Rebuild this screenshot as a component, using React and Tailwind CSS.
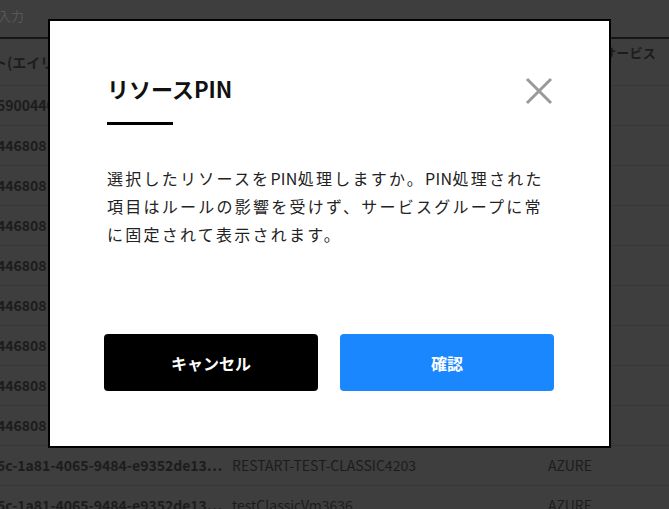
const rows = [
  { id: "5900446…", name: "", cloud: "" },
  { id: "446808", name: "", cloud: "" },
  { id: "446808", name: "", cloud: "" },
  { id: "446808", name: "", cloud: "" },
  { id: "446808", name: "", cloud: "" },
  { id: "446808", name: "", cloud: "" },
  { id: "446808", name: "", cloud: "" },
  { id: "446808", name: "", cloud: "" },
  { id: "446808", name: "", cloud: "" },
  { id: "5c-1a81-4065-9484-e9352de13…", name: "RESTART-TEST-CLASSIC4203", cloud: "AZURE" },
  { id: "5c-1a81-4065-9484-e9352de13…", name: "testClassicVm3636", cloud: "AZURE" },
];

function CloseIcon() {
  return (
    <svg width="28" height="28" viewBox="0 0 28 28" fill="none">
      <path d="M2 2 L26 26 M26 2 L2 26" stroke="#9a9a9a" strokeWidth="3" />
    </svg>
  );
}

export default function App() {
  return (
    <div
      className="relative w-[669px] h-[509px] overflow-hidden bg-[#3e3e3e]"
      style={{ fontFamily: '"Noto Sans CJK JP", "Noto Sans", sans-serif' }}
    >
      {/* page behind the overlay */}
      <div className="h-[37px] flex items-center text-[13px] text-[#585858] pb-[6px]">
        <span className="ml-[-2px]">入力</span>
      </div>
      <div className="h-[2px] bg-[#161616]" />
      <div className="ml-[-3px] flex flex-col text-[14px] text-[#1c1c1c]">
        <div className="h-[47px] flex border-b border-[#373737]">
          <div className="w-[235px] font-bold pt-[13px] ml-[-4px]">ト(エイリアス)</div>
          <div className="w-[316px]" />
          <div className="w-[59px]" />
          <div className="font-bold text-[13px] pt-[4px] tracking-[0.02em]">サービス</div>
        </div>
        {rows.map((row, idx) => (
          <div key={idx} className="h-[40px] flex items-center border-b border-[#373737]">
            <div className="w-[235px] font-bold whitespace-nowrap overflow-hidden">{row.id}</div>
            <div className="w-[316px] whitespace-nowrap">{row.name}</div>
            <div className="w-[59px]">{row.cloud}</div>
          </div>
        ))}
      </div>

      {/* modal */}
      <div className="absolute inset-0 pl-[48px] pt-[19px]">
        <div className="w-[563px] h-[429px] bg-white border-2 border-black flex flex-col px-[54px] pt-[50px]">
          <div className="flex items-center justify-between pl-[3px]">
            <h2 className="text-[22px] font-bold text-[#111] leading-[30px]">リソースPIN</h2>
            <div className="mr-[2px] mt-[6px]">
              <CloseIcon />
            </div>
          </div>
          <div className="ml-[3px] mt-[17px] w-[66px] h-[3px] bg-black" />
          <p className="ml-[3px] mt-[39px] text-[16px] leading-[28px] tracking-[0.14em] text-[#222]">
            選択したリソースを<span className="tracking-[0.02em]">PIN</span>処理しますか。
            <span className="tracking-[0.02em]">PIN</span>処理された項目はルールの影響を受けず、サービスグループに常に固定されて表示されます。
          </p>
          <div className="mt-auto mb-[55px] flex gap-[22px]">
            <button className="w-[214px] h-[57px] rounded-[4px] bg-black text-white text-[16px] font-bold">
              キャンセル
            </button>
            <button className="w-[214px] h-[57px] rounded-[4px] bg-[#1a87ff] text-white text-[16px] font-bold">
              確認
            </button>
          </div>
        </div>
      </div>
    </div>
  );
}
